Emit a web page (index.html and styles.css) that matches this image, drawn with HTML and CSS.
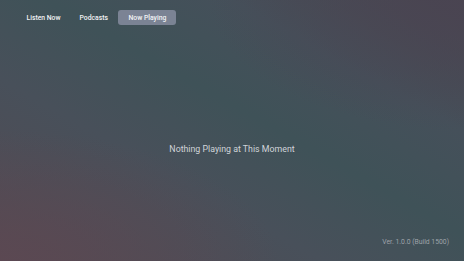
FILE: index.html
```html
<!DOCTYPE html>
<html>
<head>
<meta charset="utf-8">
<link rel="stylesheet" href="styles.css">
</head>
<body>
<div class="screen">
  <nav class="tabs">
    <span class="tab">Listen Now</span>
    <span class="tab">Podcasts</span>
    <span class="tab active">Now Playing</span>
  </nav>
  <main class="content">
    <p class="empty">Nothing Playing at This Moment</p>
  </main>
  <footer class="footer">
    <span class="version">Ver. 1.0.0 (Build 1500)</span>
  </footer>
</div>
</body>
</html>
```
FILE: styles.css
```css
html, body {
  margin: 0;
  padding: 0;
  width: 464px;
  height: 261px;
  overflow: hidden;
}
body {
  font-family: Roboto, "Liberation Sans", sans-serif;
}
.screen {
  width: 464px;
  height: 261px;
  display: flex;
  flex-direction: column;
  box-sizing: border-box;
  background:
    radial-gradient(ellipse 60% 50% at 0% 100%, rgba(92, 72, 82, 0.9), rgba(92, 72, 82, 0) 100%),
    radial-gradient(ellipse 55% 50% at 100% 0%, rgba(74, 68, 82, 0.9), rgba(74, 68, 82, 0) 100%),
    linear-gradient(to top right, #534a53 0%, #48505a 35%, #3f5258 55%, #45505a 75%, #49464f 100%);
}
.tabs {
  display: flex;
  align-items: center;
  padding: 10px 0 0 17px;
  height: 15px;
}
.tab {
  display: flex;
  align-items: center;
  height: 15px;
  padding: 0 9.5px;
  font-size: 6.8px;
  font-weight: 500;
  color: #f2f3f5;
  border-radius: 3px;
  white-space: nowrap;
}
.tab.active {
  background: #7b8394;
  padding: 0 10px;
  margin-left: 1px;
}
.content {
  flex: 1;
  display: flex;
  align-items: center;
  justify-content: center;
  padding-top: 34px;
}
.empty {
  margin: 0;
  font-size: 8.8px;
  color: #d0d4d8;
}
.footer {
  display: flex;
  justify-content: flex-end;
  padding: 0 15px 15px 0;
}
.version {
  font-size: 6.8px;
  color: #9ea3aa;
}
```
